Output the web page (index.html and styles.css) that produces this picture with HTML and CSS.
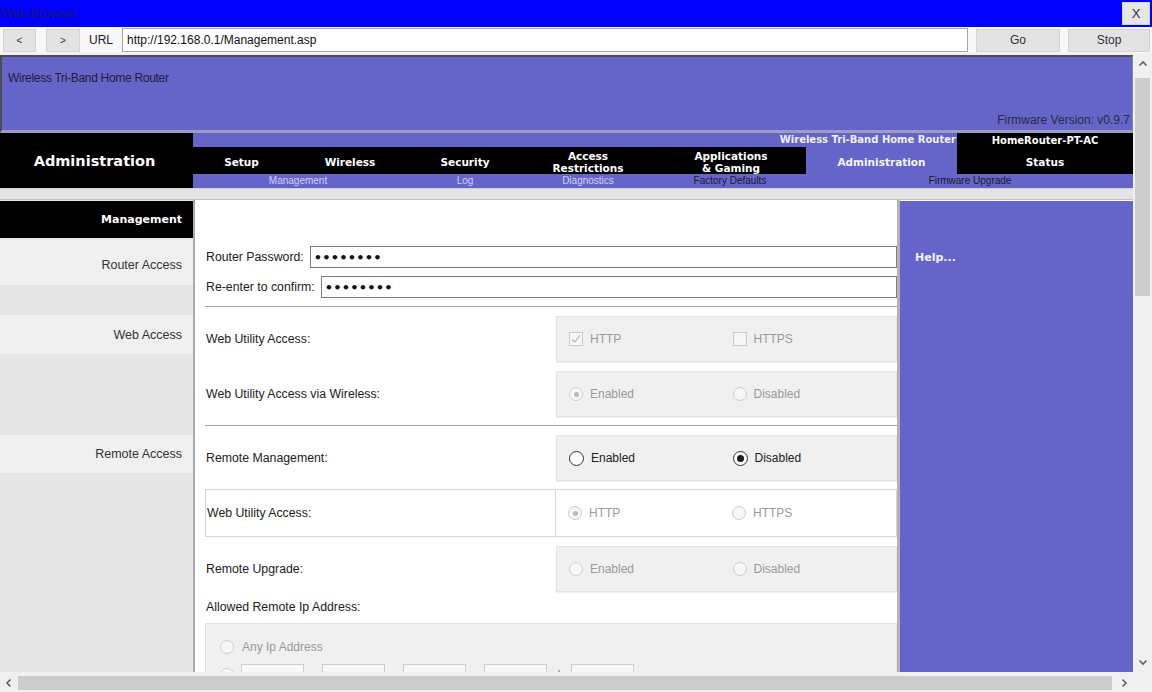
FILE: index.html
```html
<!DOCTYPE html>
<html>
<head>
<meta charset="utf-8">
<title>Web Browser</title>
<link rel="stylesheet" href="styles.css">
</head>
<body>
<div class="window">
  <div class="titlebar">
    <span class="title">Web Browser</span>
    <div class="close">X</div>
  </div>
  <div class="toolbar">
    <div class="btn back">&lt;</div>
    <div class="btn fwd">&gt;</div>
    <div class="url-label">URL</div>
    <div class="url-input">http://192.168.0.1/Management.asp</div>
    <div class="btn go">Go</div>
    <div class="btn stop">Stop</div>
  </div>
  <div class="viewport">
    <div class="page">
      <div class="brand">
        <div class="brand-name">Wireless Tri-Band Home Router</div>
        <div class="firmware">Firmware Version: v0.9.7</div>
      </div>
      <div class="menu">
        <div class="menu-title">Administration</div>
        <div class="menu-body">
          <div class="brandline">Wireless Tri-Band Home Router</div>
          <div class="tab c1">Setup</div>
          <div class="tab c2">Wireless</div>
          <div class="tab c3">Security</div>
          <div class="tab c4">Access<br>Restrictions</div>
          <div class="tab c5">Applications<br>&amp; Gaming</div>
          <div class="tab c6 active">Administration</div>
          <div class="status">
            <div class="status-model">HomeRouter-PT-AC</div>
            <div class="status-tab">Status</div>
          </div>
          <div class="subnav">
            <div class="sub s1 light">Management</div>
            <div class="sub s2 light">Log</div>
            <div class="sub s3 light">Diagnostics</div>
            <div class="sub s4">Factory Defaults</div>
            <div class="sub s5">Firmware Upgrade</div>
          </div>
        </div>
      </div>
      <div class="strip"></div>
      <div class="main">
        <aside class="side">
          <div class="side-head">Management</div>
          <div class="side-item router">Router Access</div>
          <div class="side-item web">Web Access</div>
          <div class="side-item remote">Remote Access</div>
        </aside>
        <section class="content">
          <div class="pw-row">
            <span class="lbl">Router Password:</span>
            <div class="pw-input"><span class="dots">••••••••</span></div>
          </div>
          <div class="pw-row">
            <span class="lbl">Re-enter to confirm:</span>
            <div class="pw-input"><span class="dots">••••••••</span></div>
          </div>
          <div class="rule first-rule"></div>

          <div class="row">
            <span class="lbl">Web Utility Access:</span>
            <div class="opts">
              <div class="opt off">
                <span class="chk checked"><svg width="12" height="12" viewBox="0 0 12 12"><path d="M2 6.5 L4.8 9 L10 2.5" fill="none" stroke="#b4b4b4" stroke-width="1.2"/></svg></span>
                <span>HTTP</span>
              </div>
              <div class="opt off">
                <span class="chk"></span>
                <span>HTTPS</span>
              </div>
            </div>
          </div>
          <div class="row">
            <span class="lbl">Web Utility Access via Wireless:</span>
            <div class="opts">
              <div class="opt off"><span class="radio sel"></span><span>Enabled</span></div>
              <div class="opt off"><span class="radio"></span><span>Disabled</span></div>
            </div>
          </div>
          <div class="rule second-rule"></div>

          <div class="row">
            <span class="lbl">Remote Management:</span>
            <div class="opts">
              <div class="opt on"><span class="radio"></span><span>Enabled</span></div>
              <div class="opt on"><span class="radio sel"></span><span>Disabled</span></div>
            </div>
          </div>
          <div class="row framed">
            <span class="lbl">Web Utility Access:</span>
            <div class="opts white">
              <div class="opt off"><span class="radio sel"></span><span>HTTP</span></div>
              <div class="opt off"><span class="radio"></span><span>HTTPS</span></div>
            </div>
          </div>
          <div class="row">
            <span class="lbl">Remote Upgrade:</span>
            <div class="opts">
              <div class="opt off"><span class="radio"></span><span>Enabled</span></div>
              <div class="opt off"><span class="radio"></span><span>Disabled</span></div>
            </div>
          </div>
          <div class="allowed">Allowed Remote Ip Address:</div>
          <div class="ipbox">
            <div class="ip-line"><span class="radio"></span><span>Any Ip Address</span></div>
            <div class="ip-line ip-fields">
              <span class="radio"></span>
              <span class="ipf"></span><span class="sep"></span>
              <span class="ipf"></span><span class="sep"></span>
              <span class="ipf"></span><span class="sep"></span>
              <span class="ipf"></span><span class="sep colon"><i class="cdot"></i></span>
              <span class="ipf"></span>
            </div>
          </div>
        </section>
        <aside class="help">Help...</aside>
      </div>
    </div>
    <div class="vscroll">
      <svg class="arrow-up" width="10" height="7" viewBox="0 0 10 7"><polyline points="1.5,5.5 5,2 8.5,5.5" fill="none" stroke="#606060" stroke-width="1.6"/></svg>
      <div class="vthumb"></div>
      <div class="vspace"></div>
      <svg class="arrow-down" width="10" height="7" viewBox="0 0 10 7"><polyline points="1.5,1.5 5,5 8.5,1.5" fill="none" stroke="#606060" stroke-width="1.6"/></svg>
    </div>
  </div>
  <div class="hscroll">
    <svg class="arrow-left" width="7" height="10" viewBox="0 0 7 10"><polyline points="5.5,1.5 2,5 5.5,8.5" fill="none" stroke="#606060" stroke-width="1.6"/></svg>
    <div class="hthumb"></div>
    <svg class="arrow-right" width="7" height="10" viewBox="0 0 7 10"><polyline points="1.5,1.5 5,5 1.5,8.5" fill="none" stroke="#606060" stroke-width="1.6"/></svg>
  </div>
</div>
</body>
</html>
```

FILE: styles.css
```css
* { box-sizing: border-box; }
html, body { margin: 0; padding: 0; }
body {
  width: 1152px;
  height: 692px;
  overflow: hidden;
  font-family: "Liberation Sans", Arial, sans-serif;
  background: #f0f0f0;
}
.window {
  display: flex;
  flex-direction: column;
  width: 1152px;
  height: 692px;
}

/* title bar */
.titlebar {
  height: 27px;
  background: #0000ff;
  display: flex;
  align-items: center;
  justify-content: space-between;
  padding-right: 2px;
}
.title {
  font-size: 13px;
  color: #18186e;
  margin-left: 1px;
  letter-spacing: -0.2px;
}
.close {
  width: 28px;
  height: 23px;
  background: #e6e6e6;
  border: 1px solid #d6d6d6;
  color: #333;
  font-size: 13px;
  display: flex;
  align-items: center;
  justify-content: center;
}

/* toolbar */
.toolbar {
  height: 26px;
  background: #f7f7f7;
  display: flex;
  align-items: center;
  padding-left: 3px;
}
.btn {
  height: 23px;
  background: #e3e3e3;
  border: 1px solid #d2d2d2;
  display: flex;
  align-items: center;
  justify-content: center;
  font-size: 12px;
  color: #333;
}
.back { width: 33px; font-size: 10px; }
.fwd { width: 34px; margin-left: 10px; font-size: 10px; }
.url-label {
  width: 34px;
  height: 23px;
  margin-left: 4px;
  display: flex;
  align-items: center;
  justify-content: center;
  font-size: 12px;
  color: #222;
  background: #f7f7f7;
}
.url-input {
  width: 846px;
  height: 24px;
  margin-left: 4px;
  background: #fff;
  border: 1px solid #a6a6a6;
  font-size: 12px;
  color: #111;
  padding-left: 4px;
  display: flex;
  align-items: center;
}
.go { width: 84px; margin-left: 8px; }
.stop { width: 82px; margin-left: 8px; }

/* viewport */
.viewport {
  height: 621px;
  display: flex;
}
.page {
  width: 1133px;
  height: 621px;
  overflow: hidden;
  padding-top: 2px;
  background: #f0f0f0;
}
.vscroll {
  width: 19px;
  background: #f0f0f0;
  display: flex;
  flex-direction: column;
  align-items: center;
}
.arrow-up { margin-top: 7px; }
.vthumb {
  width: 15px;
  height: 218px;
  margin-top: 11px;
  background: #cdcdcd;
}
.vspace { flex: 1; }
.arrow-down { margin-bottom: 8px; }

.hscroll {
  height: 18px;
  background: #f0f0f0;
  display: flex;
  align-items: center;
  padding-left: 5px;
}
.hthumb {
  width: 1094px;
  height: 14px;
  margin-left: 6px;
  background: #cdcdcd;
}
.arrow-right { margin-left: 9px; }

/* brand header */
.brand {
  height: 78px;
  background: #6565c9;
  border-top: 2px solid #4e4e4e;
  border-left: 2px solid #4e4e4e;
  border-right: 1px solid #8a8a8a;
  border-bottom: 3px solid #9c9cc4;
  display: flex;
  flex-direction: column;
  justify-content: space-between;
  padding: 14px 2px 3px 6px;
}
.brand-name {
  font-size: 12px;
  color: #1d1d3a;
  letter-spacing: -0.3px;
}
.firmware {
  font-size: 12px;
  color: #2a2a40;
  text-align: right;
}

/* menu */
.menu {
  display: flex;
  height: 55px;
}
.menu-title {
  width: 193px;
  flex: none;
  background: #000;
  color: #fff;
  font-family: "DejaVu Sans", Verdana, sans-serif;
  font-weight: bold;
  font-size: 14.5px;
  display: flex;
  align-items: center;
  justify-content: center;
  padding-right: 4px;
}
.menu-body {
  flex: 1;
  display: grid;
  grid-template-columns: 97px 120px 110px 136px 150px 151px 1fr;
  grid-template-rows: 14px 27px 14px;
  background: #6565c9;
  font-family: "DejaVu Sans", Verdana, sans-serif;
  font-weight: bold;
  color: #fff;
}
.brandline {
  grid-column: 1 / 7;
  grid-row: 1;
  text-align: right;
  font-size: 10px;
  line-height: 14px;
  color: #f0f0ff;
  padding-right: 1px;
  white-space: nowrap;
}
.tab {
  grid-row: 2;
  background: #000;
  display: flex;
  align-items: center;
  justify-content: center;
  text-align: center;
  font-size: 10.5px;
  line-height: 12px;
  padding-top: 2px;
}
.c1 { grid-column: 1; }
.c2 { grid-column: 2; }
.c3 { grid-column: 3; }
.c4 { grid-column: 4; }
.c5 { grid-column: 5; }
.c6 { grid-column: 6; }
.tab.active {
  background: transparent;
  color: #f4f4ff;
}
.status {
  grid-column: 7;
  grid-row: 1 / 3;
  background: #000;
  display: flex;
  flex-direction: column;
  align-items: center;
  font-size: 10.5px;
}
.status-model {
  height: 14px;
  line-height: 14px;
  padding-top: 1px;
  font-size: 10px;
}
.status-tab {
  flex: 1;
  display: flex;
  align-items: center;
  padding-top: 2px;
}
.subnav {
  grid-column: 1 / -1;
  grid-row: 3;
  display: flex;
  font-family: "Liberation Sans", Arial, sans-serif;
  font-weight: normal;
  font-size: 10px;
  line-height: 14px;
  color: #1a1a2a;
}
.sub { text-align: center; white-space: nowrap; }
.sub.light { color: #cfcff4; }
.s1 { width: 210px; }
.s2 { width: 124px; }
.s3 { width: 122px; }
.s4 { width: 162px; }
.s5 { width: 318px; }

.strip {
  height: 12px;
  background: #e4e4e4;
  border-top: 1px solid #d0d0d0;
  border-bottom: 1px solid #c4c4c4;
}

/* main */
.main {
  display: flex;
  height: 472px;
  background: #fff;
}
.side {
  width: 195px;
  flex: none;
  background: #e6e6e6;
  border-right: 2px solid #a9a9a9;
  padding-top: 1px;
}
.side-head {
  height: 37px;
  background: #000;
  color: #fff;
  font-family: "DejaVu Sans", Verdana, sans-serif;
  font-weight: bold;
  font-size: 11px;
  display: flex;
  align-items: center;
  justify-content: flex-end;
  padding-right: 11px;
}
.side-item {
  background: #f0f0f0;
  font-size: 12.5px;
  color: #333;
  display: flex;
  align-items: center;
  justify-content: flex-end;
  padding-right: 11px;
}
.side-item.router { margin-top: 2px; height: 45px; padding-top: 4px; }
.side-item.web { margin-top: 30px; height: 39px; }
.side-item.remote { margin-top: 81px; height: 38px; }

.content {
  width: 705px;
  flex: none;
  padding: 46px 0 0 10px;
  border-right: 3px solid #b3b3b3;
  font-size: 12.3px;
  color: #222;
  overflow: hidden;
}
.lbl { padding-left: 1px; white-space: nowrap; }
.pw-row {
  display: flex;
  align-items: center;
  height: 22px;
  margin-bottom: 8px;
}
.pw-input {
  flex: 1;
  height: 22px;
  margin-left: 6px;
  border: 1px solid #7c7c7c;
  background: #fff;
  display: flex;
  align-items: center;
  padding-left: 3px;
}
.dots {
  font-family: "DejaVu Sans", sans-serif;
  font-size: 13px;
  font-weight: bold;
  letter-spacing: 0.2px;
  color: #111;
}
.rule {
  height: 1px;
  background: #a4a4a4;
}
.first-rule { margin: 0 0 9px; }
.second-rule { margin: 1px 0 9px; }

.row {
  display: flex;
  align-items: center;
  justify-content: space-between;
  height: 46px;
  margin-bottom: 8px;
}
.opts {
  width: 341px;
  height: 46px;
  background: #f0f0f0;
  border: 1px solid #e2e2e2;
  box-shadow: 0 1px 1px rgba(0,0,0,0.06);
  display: flex;
  align-items: center;
  padding-left: 12px;
  font-size: 12px;
}
.opts.white {
  background: #fff;
  box-shadow: none;
  border: none;
  border-left: 1px solid #d8d8d8;
}
.row.framed {
  height: 48px;
  border: 1px solid #d8d8d8;
  margin-bottom: 9px;
}
.row.framed .opts { height: 46px; }
.opt {
  width: 164px;
  display: flex;
  align-items: center;
  gap: 7px;
}
.opt.off { color: #9a9a9a; }
.opt.on { color: #222; }

.chk {
  width: 14px;
  height: 14px;
  border: 1px solid #cbcbcb;
  background: #f6f6f6;
  display: flex;
  align-items: center;
  justify-content: center;
}
.radio {
  width: 14px;
  height: 14px;
  border-radius: 50%;
  border: 1px solid #cdcdcd;
  background: #f7f7f7;
  display: inline-flex;
  align-items: center;
  justify-content: center;
  flex: none;
}
.radio.sel::after {
  content: "";
  width: 5px;
  height: 5px;
  border-radius: 50%;
  background: #b9b9b9;
}
.opt.on .radio {
  width: 15px;
  height: 15px;
  border: 1px solid #333;
  background: #fff;
}
.opt.on .radio.sel::after {
  width: 7px;
  height: 7px;
  background: #1a1a1a;
}

.row:nth-of-type(4) { margin-bottom: 9px; }

.allowed {
  height: 14px;
  line-height: 14px;
  margin-top: 8px;
  padding-left: 1px;
}
.ipbox {
  margin-top: 9px;
  height: 60px;
  background: #f0f0f0;
  border: 1px solid #e0e0e0;
  padding: 15px 0 0 14px;
  color: #9a9a9a;
  font-size: 12px;
}
.ip-line {
  display: flex;
  align-items: center;
  gap: 8px;
  height: 16px;
}
.ip-fields {
  margin-top: 9px;
  height: 22px;
  align-items: flex-start;
  gap: 0;
}
.ip-fields .radio { margin-top: 4px; margin-right: 7px; }
.ipf {
  width: 63px;
  height: 20px;
  border: 1px solid #cfcfcf;
  background: #f8f8f8;
}
.sep {
  width: 18px;
  height: 8px;
  display: flex;
  justify-content: center;
  align-items: flex-end;
}
.sep.colon { width: 24px; }
.cdot {
  width: 2px;
  height: 2px;
  background: #aaa;
}

.help {
  flex: 1;
  background: #6565c9;
  margin-top: 1px;
  color: #f2f2ff;
  font-family: "DejaVu Sans", Verdana, sans-serif;
  font-weight: bold;
  font-size: 11px;
  padding: 50px 0 0 15px;
}
```
